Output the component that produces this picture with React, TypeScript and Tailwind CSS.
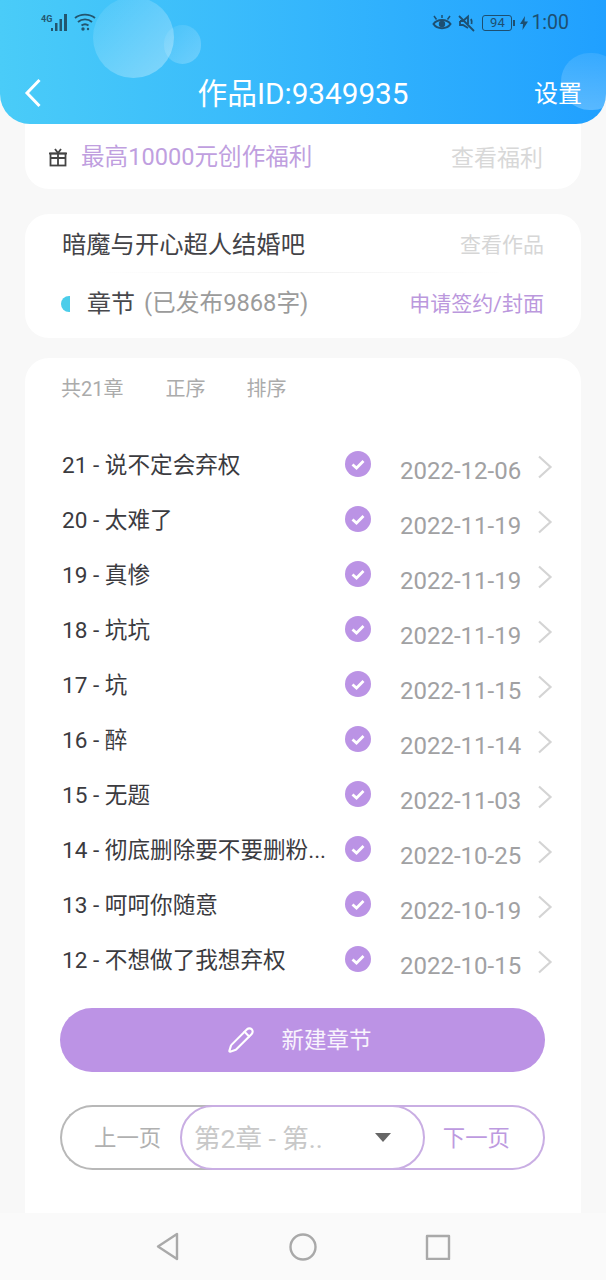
import { Pencil } from 'lucide-react'

const chapters = [
  ['21 - 说不定会弃权', '2022-12-06'],
  ['20 - 太难了', '2022-11-19'],
  ['19 - 真惨', '2022-11-19'],
  ['18 - 坑坑', '2022-11-19'],
  ['17 - 坑', '2022-11-15'],
  ['16 - 醉', '2022-11-14'],
  ['15 - 无题', '2022-11-03'],
  ['14 - 彻底删除要不要删粉...', '2022-10-25'],
  ['13 - 呵呵你随意', '2022-10-19'],
  ['12 - 不想做了我想弃权', '2022-10-15'],
]

function StatusLeft() {
  return (
    <div className="flex items-start text-[#23566f]">
      <span className="text-[9px] font-bold leading-[10px] mt-[1px]">4G</span>
      <svg width="18" height="18" viewBox="0 0 18 18" fill="currentColor" className="ml-[-1px]">
        <rect x="0" y="15" width="2" height="3" />
        <rect x="4" y="10" width="2.500" height="8" />
        <rect x="8.500" y="6" width="2.500" height="12" />
        <rect x="13" y="1" width="3" height="17" />
      </svg>
      <svg width="22" height="18" viewBox="0 0 22 18" fill="none" stroke="currentColor" strokeWidth="1.900" className="ml-[5px]">
        <path d="M1 5C6.500 0.500 15.500 0.500 21 5" />
        <path d="M4 9C8 5.500 14 5.500 18 9" />
        <path d="M7.500 12.500C9.500 11 12.500 11 14.500 12.500" />
        <circle cx="9" cy="16" r="1.700" fill="currentColor" stroke="none" />
        <circle cx="14" cy="16" r="1.200" fill="currentColor" stroke="none" />
      </svg>
    </div>
  )
}

function StatusRight() {
  return (
    <div className="flex items-center text-[#1d4f71]">
      <svg width="20" height="17" viewBox="0 0 20 17" fill="none" stroke="currentColor" strokeWidth="2">
        <path d="M1.500 10C5 4.500 15 4.500 18.500 10C15 15.500 5 15.500 1.500 10Z" />
        <circle cx="10" cy="10" r="3.200" fill="currentColor" stroke="none" />
        <path d="M2 2L4.500 5.500M18 2L15.500 5.500M10 1V4" strokeWidth="1.500" />
      </svg>
      <svg width="18" height="18" viewBox="0 0 18 18" fill="none" stroke="currentColor" strokeWidth="1.800" className="ml-[5px]">
        <path d="M2 2L17 17" />
        <path d="M3 7H6L11 2.500V10M11 14L6 11H3V7" />
        <path d="M14 5C15 7 15 8 14.500 10" />
      </svg>
      <div className="ml-[7px] w-[30px] h-[16px] rounded-[3px] border border-[#1d4f71] flex items-center justify-center text-[13px] leading-none">94</div>
      <div className="w-[2px] h-[6px] ml-[1px] bg-[#1d4f71]" />
      <svg width="8" height="14" viewBox="0 0 8 14" fill="currentColor" className="ml-[5px]">
        <path d="M5 0L0 8H3L2.500 14L8 5.500H4.500Z" />
      </svg>
      <span className="ml-[3px] text-[19.5px] leading-none">1:00</span>
    </div>
  )
}

function Header() {
  return (
    <header className="relative z-10 h-[124px] rounded-b-[30px] overflow-hidden bg-gradient-to-r from-[#4accf8] to-[#20a0ff] text-white">
      <div className="absolute left-[93px] top-[-3px] w-[81px] h-[81px] rounded-full bg-gradient-to-br from-white/5 to-white/35" />
      <div className="absolute left-[164px] top-[25px] w-[37px] h-[39px] rounded-full bg-gradient-to-br from-white/5 to-white/25" />
      <div className="absolute left-[561px] top-[53px] w-[60px] h-[57px] rounded-full bg-gradient-to-b from-white/10 to-white/25" />
      <div className="relative h-[44px] pl-[41px] pr-[37px] pt-[13px] flex items-start justify-between">
        <StatusLeft />
        <StatusRight />
      </div>
      <div className="relative flex items-center justify-between h-[48px] pl-[24px] pr-[24px] mt-[26px]">
        <svg width="18" height="30" viewBox="0 0 18 30" fill="none" stroke="white" strokeWidth="3" className="-mt-[2px]">
          <path d="M15.500 2L3 15L15.500 28" />
        </svg>
        <span className="absolute left-0 right-0 text-center text-[29.7px] leading-none">作品ID:9349935</span>
        <span className="text-[24px] leading-none">设置</span>
      </div>
    </header>
  )
}

function Gift() {
  return (
    <svg width="20" height="20" viewBox="0 0 20 20" fill="none" stroke="#444" strokeWidth="1.800">
      <path d="M1 6.500H19" />
      <rect x="2.500" y="6.500" width="15" height="12" />
      <path d="M2.500 11H17.500M10 6.500V18.500M7 2L10 6L13 2" />
    </svg>
  )
}

function Check() {
  return (
    <svg width="26" height="26" viewBox="0 0 26 26" className="shrink-0">
      <circle cx="13" cy="13" r="13" fill="#bb93e5" />
      <path d="M7.500 13.500L11.500 17L18.500 10" fill="none" stroke="white" strokeWidth="2.800" />
    </svg>
  )
}

function Chevron() {
  return (
    <svg width="16" height="24" viewBox="0 0 16 24" fill="none" stroke="#d4d4d4" strokeWidth="2.200" className="shrink-0 ml-[13px] -mt-[3px]">
      <path d="M2 1.500L13.500 12L2 22.500" />
    </svg>
  )
}

function Row({ title, date }: { title: string; date: string }) {
  return (
    <div className="flex items-center h-[55px]">
      <div className="w-[283px] text-[22.6px] leading-[28px] text-[#3b3b3f] whitespace-nowrap -mt-[5px]">{title}</div>
      <div className="-mt-[9px]"><Check /></div>
      <div className="ml-[29px] text-[24px] leading-none text-[#a1a1a3] w-[124px] whitespace-nowrap mt-[5px]">{date}</div>
      <Chevron />
    </div>
  )
}

export default function App() {
  return (
    <div className="relative w-[606px] h-[1280px] overflow-hidden bg-[#f8f8f8] flex flex-col font-['Roboto','Noto_Sans_CJK_SC',sans-serif]">
      <Header />
      <main className="flex-1 px-[25px] min-h-0">
        <section className="h-[65px] bg-white rounded-b-[24px] flex items-center pl-[23px] pr-[38px]">
          <Gift />
          <span className="ml-[13px] text-[23.6px] leading-none text-[#c09fdf] mt-[3px]">最高10000元创作福利</span>
          <span className="ml-auto text-[23px] leading-none text-[#d8d8d8] mt-[3px]">查看福利</span>
        </section>

        <section className="mt-[25px] h-[124px] bg-white rounded-[24px] px-[37px] pt-[3px]">
          <div className="relative h-[56px] flex items-center justify-between">
            <span className="text-[24.3px] leading-none text-[#434347]">暗魔与开心超人结婚吧</span>
            <span className="text-[21px] leading-none text-[#d6d6d6]">查看作品</span>
            <div className="absolute left-[30px] right-[30px] bottom-0 h-px bg-gradient-to-r from-white via-[#f2f2f2] to-white" />
          </div>
          <div className="h-[62px] flex items-center">
            <div className="w-[9px] h-[16px] rounded-l-full bg-[#4bcdea] -ml-[1px]" />
            <span className="ml-[17px] text-[24px] leading-none text-[#48484c]">章节</span>
            <span className="ml-[9px] text-[23.7px] leading-none text-[#9b9b9b]">(已发布9868字)</span>
            <span className="ml-auto text-[21px] leading-none text-[#bb98dd]">申请签约/封面</span>
          </div>
        </section>

        <section className="mt-[20px] h-[860px] bg-white rounded-t-[24px] pl-[37px] pr-[27px]">
          <div className="flex pt-[21px] text-[20px] leading-none text-[#ababab] -ml-[1px]">
            <span>共21章</span>
            <span className="ml-[42px]">正序</span>
            <span className="ml-[41px]">排序</span>
          </div>
          <div className="mt-[42px]">
            {chapters.map(([title, date]) => (
              <Row key={title} title={title} date={date} />
            ))}
          </div>
          <button className="mt-[17px] -ml-[2px] w-[485px] h-[64px] rounded-full bg-[#bc93e5] flex items-center justify-center text-white">
            <Pencil size={28} strokeWidth={1.8} className="-ml-[6px]" />
            <span className="ml-[26px] text-[22.5px] leading-none text-white/90">新建章节</span>
          </button>
          <div className="relative mt-[33px] -ml-[2px] w-[485px] h-[65px] flex">
            <div className="w-[180px] h-full rounded-l-full border-2 border-r-0 border-[#b8b8b8] flex items-center pl-[32px] text-[22.4px] text-[#b0b0b0]"><span className="mt-[2px]">上一页</span></div>
            <div className="w-[245px] h-full -ml-[60px] z-10 rounded-full border-2 border-[#c9aee3] bg-white flex items-center pl-[12px] pr-[32px] text-[26.5px] text-[#c8c8c8] justify-between">
              <span className="mt-[2px]">第2章 - 第..</span>
              <div className="w-0 h-0 border-x-[8px] border-x-transparent border-t-[9px] border-t-[#666] mt-[-1px]" />
            </div>
            <div className="flex-1 h-full -ml-[60px] rounded-r-full border-2 border-l-0 border-[#c9aee3] flex items-center justify-end pr-[33px] text-[22.4px] text-[#bd9ae0]"><span className="mt-[2px]">下一页</span></div>
          </div>
        </section>
      </main>
      <nav className="relative h-[67px] bg-[#fafafa] flex items-center justify-center gap-[108px]">
        <svg width="26" height="30" viewBox="0 0 26 30" fill="none" stroke="#a9a9a9" strokeWidth="2.400" strokeLinejoin="round"><path d="M22 2V27L3 14.500Z" /></svg>
        <svg width="28" height="28" viewBox="0 0 28 28" fill="none" stroke="#a9a9a9" strokeWidth="2.400"><circle cx="14" cy="14" r="12.500" /></svg>
        <svg width="26" height="26" viewBox="0 0 26 26" fill="none" stroke="#a9a9a9" strokeWidth="2.400" strokeLinejoin="round"><rect x="2" y="2" width="22" height="23" /></svg>
      </nav>
    </div>
  )
}
